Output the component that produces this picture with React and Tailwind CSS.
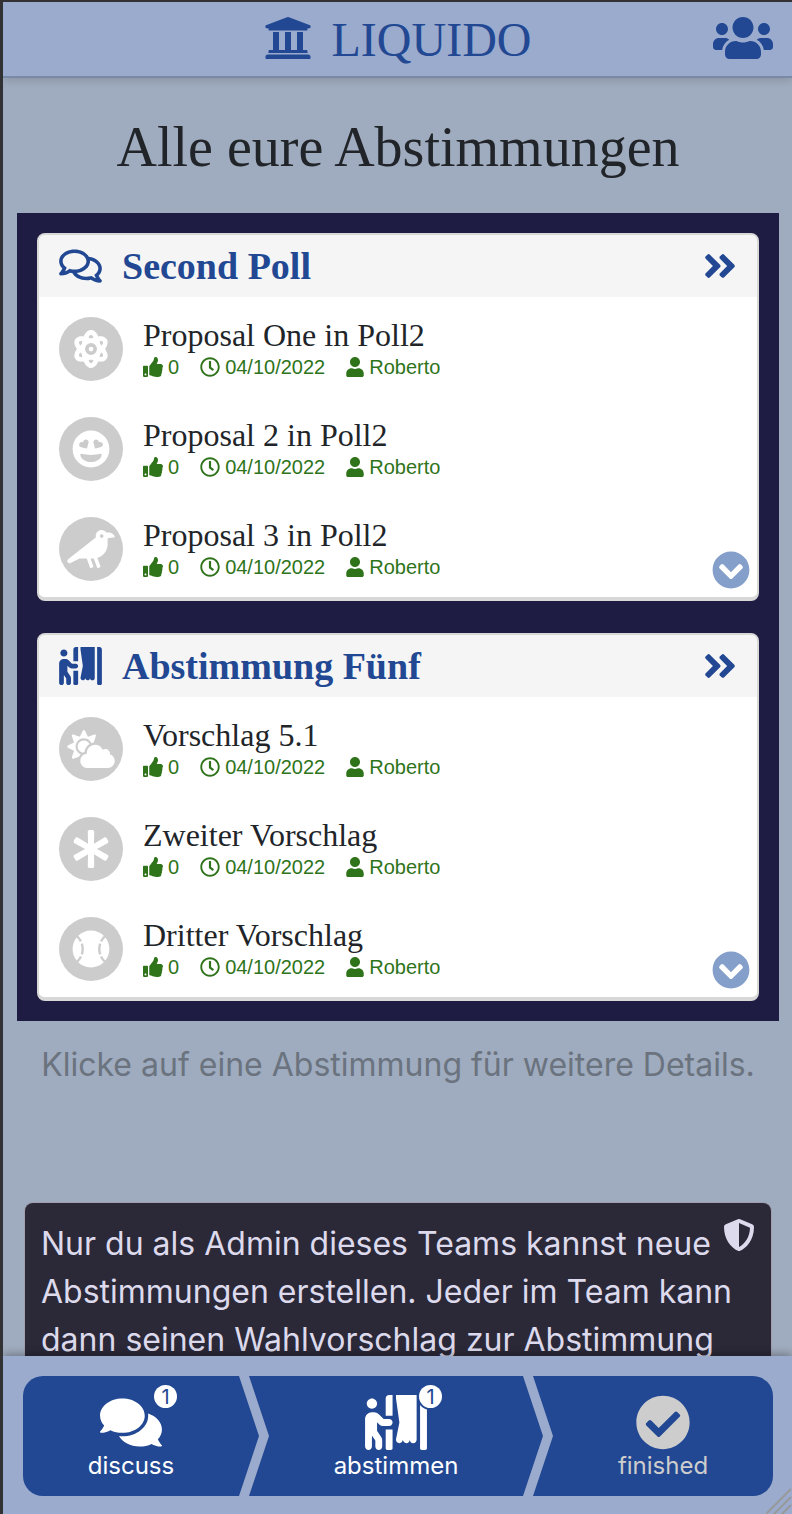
import React from "react";
import {
  FaUniversity,
  FaUsers,
  FaRegComments,
  FaComments,
  FaPersonBooth,
  FaAngleDoubleRight,
  FaThumbsUp,
  FaRegClock,
  FaUser,
  FaAtom,
  FaGrinHearts,
  FaCrow,
  FaCloudSun,
  FaAsterisk,
  FaBaseballBall,
  FaChevronCircleDown,
  FaShieldAlt,
  FaCheckCircle,
} from "react-icons/fa";

const polls = [
  {
    title: "Second Poll",
    Icon: FaRegComments,
    proposals: [
      { title: "Proposal One in Poll2", Icon: FaAtom, wide: false },
      { title: "Proposal 2 in Poll2", Icon: FaGrinHearts, wide: false },
      { title: "Proposal 3 in Poll2", Icon: FaCrow, wide: true },
    ],
  },
  {
    title: "Abstimmung Fünf",
    Icon: FaPersonBooth,
    proposals: [
      { title: "Vorschlag 5.1", Icon: FaCloudSun, wide: true },
      { title: "Zweiter Vorschlag", Icon: FaAsterisk, wide: false },
      { title: "Dritter Vorschlag", Icon: FaBaseballBall, wide: false },
    ],
  },
];

function Proposal({ title, Icon, wide }) {
  return (
    <li className="flex items-center gap-5">
      <span className="flex size-16 shrink-0 items-center justify-center rounded-full bg-[#cccccc] text-white">
        <Icon className={wide ? "h-[38px] w-12" : "size-[38px]"} />
      </span>
      <div>
        <h3 className="font-['Liberation_Serif',serif] text-[32px] leading-9 text-[#212529]">{title}</h3>
        <div className="flex gap-[21px] font-['Liberation_Sans',sans-serif] text-[20px] leading-7 text-[#2f741b]">
          <span className="flex items-center gap-[5px]">
            <FaThumbsUp className="size-5" />0
          </span>
          <span className="flex items-center gap-[5px]">
            <FaRegClock className="size-5" />
            04/10/2022
          </span>
          <span className="flex items-center gap-[5px]">
            <FaUser className="h-5 w-[18px]" />
            Roberto
          </span>
        </div>
      </div>
    </li>
  );
}

function PollCard({ title, Icon, proposals }) {
  return (
    <section className="relative overflow-hidden rounded-lg border-2 border-b-4 border-[#d8d8d8] bg-white">
      <a href="#poll" className="flex h-[62px] items-center gap-5 bg-[#f5f5f5] px-5 text-[#224893]">
        <Icon className="h-[38px] w-[43px]" />
        <h2 className="flex-1 font-['Liberation_Serif',serif] text-[38px] leading-[46px] font-bold">{title}</h2>
        <FaAngleDoubleRight className="h-[38px] w-[34px]" />
      </a>
      <ul className="flex flex-col gap-9 px-5 pt-5 pb-4">
        {proposals.map((p) => (
          <Proposal key={p.title} {...p} />
        ))}
      </ul>
      <button type="button" aria-label="Mehr anzeigen" className="absolute right-[7px] bottom-2 text-[#839fca]">
        <FaChevronCircleDown className="size-[38px]" />
      </button>
    </section>
  );
}

function Badge({ children }) {
  return (
    <span className="absolute -top-[10px] -right-[15px] flex size-[23px] items-center justify-center rounded-full bg-white text-[20px] leading-6 text-[#224893] ring-2 ring-[#224893]">
      {children}
    </span>
  );
}

function StepContent({ Icon, label, count }) {
  return (
    <span className="flex flex-col items-center pt-[5px]">
      <span className="relative">
        <Icon className="h-[55px] w-[62px]" />
        {count && <Badge>{count}</Badge>}
      </span>
      <span className="text-[24px] leading-8">{label}</span>
    </span>
  );
}

export default function App() {
  return (
    <div className="relative flex h-screen flex-col overflow-hidden border-t-2 border-l-3 border-[#323234] bg-[#9fabbe] font-['Inter',sans-serif]">
      <header className="relative z-10 flex items-center justify-center border-b-2 border-[#7a8aa6] bg-[#9aabcd] pt-3 pb-[10px] text-[#224893] shadow-[0_2px_8px_rgba(0,0,0,0.15)]">
        <a href="#home" className="flex items-start gap-5">
          <FaUniversity className="size-12" />
          <span className="font-['Liberation_Serif',serif] text-[48px] leading-[52px]">LIQUIDO</span>
        </a>
        <button type="button" aria-label="Team" className="absolute top-3 right-[19px]">
          <FaUsers className="h-12 w-[60px]" />
        </button>
      </header>

      <main className="min-h-0 flex-1 overflow-y-auto pt-[35px] pr-[13px] pl-[14px] [scrollbar-width:none]">
        <h1 className="mb-8 text-center font-['Liberation_Serif',serif] text-[56px] leading-[68px] text-[#212529]">
          Alle eure Abstimmungen
        </h1>
        <div className="flex flex-col gap-8 bg-[#1e1c42] p-5">
          {polls.map((poll) => (
            <PollCard key={poll.title} {...poll} />
          ))}
        </div>
        <p className="mt-5 text-center text-[32px] leading-12 text-[#6a737e]">
          Klicke auf eine Abstimmung für weitere Details.
        </p>
        <div className="mx-2 mt-[114px] rounded-lg bg-[#2b2938] p-4 text-[32px] leading-12 text-[#dcdaec] ring-1 ring-[#a19fae]">
          <FaShieldAlt className="float-right size-8" />
          <p className="pt-px">
            Nur du als Admin dieses Teams kannst neue Abstimmungen erstellen. Jeder im Team kann dann seinen
            Wahlvorschlag zur Abstimmung
          </p>
        </div>
      </main>

      <footer className="relative z-10 bg-[#9aabcd] pt-5 pr-[19px] pb-[18px] pl-5 shadow-[0_-2px_8px_rgba(0,0,0,0.3)]">
        <nav className="flex h-[120px] overflow-hidden rounded-[20px] text-white">
          <button
            type="button"
            className="flex flex-[216] items-center justify-center bg-[#224893] pr-5 [clip-path:polygon(0_0,calc(100%_-_20px)_0,100%_50%,calc(100%_-_20px)_100%,0_100%)]"
          >
            <StepContent Icon={FaComments} label="discuss" count={1} />
          </button>
          <button
            type="button"
            className="-ml-[10px] flex flex-[254] items-center justify-center bg-[#224893] px-5 [clip-path:polygon(0_0,calc(100%_-_20px)_0,100%_50%,calc(100%_-_20px)_100%,0_100%,20px_50%)]"
          >
            <StepContent Icon={FaPersonBooth} label="abstimmen" count={1} />
          </button>
          <button
            type="button"
            className="-ml-[10px] flex flex-[220] items-center justify-center bg-[#224893] pl-5 text-[#cdcdcd] [clip-path:polygon(0_0,100%_0,100%_100%,0_100%,20px_50%)]"
          >
            <StepContent Icon={FaCheckCircle} label="finished" />
          </button>
        </nav>
      </footer>

      <svg className="absolute right-0 bottom-0 z-20 size-[26px]" viewBox="0 0 26 26" stroke="#99999b" strokeWidth="2" fill="none" aria-hidden="true">
        <path d="M-1 27 25 1M7 27 25 9M15 27 25 17" />
      </svg>
    </div>
  );
}
